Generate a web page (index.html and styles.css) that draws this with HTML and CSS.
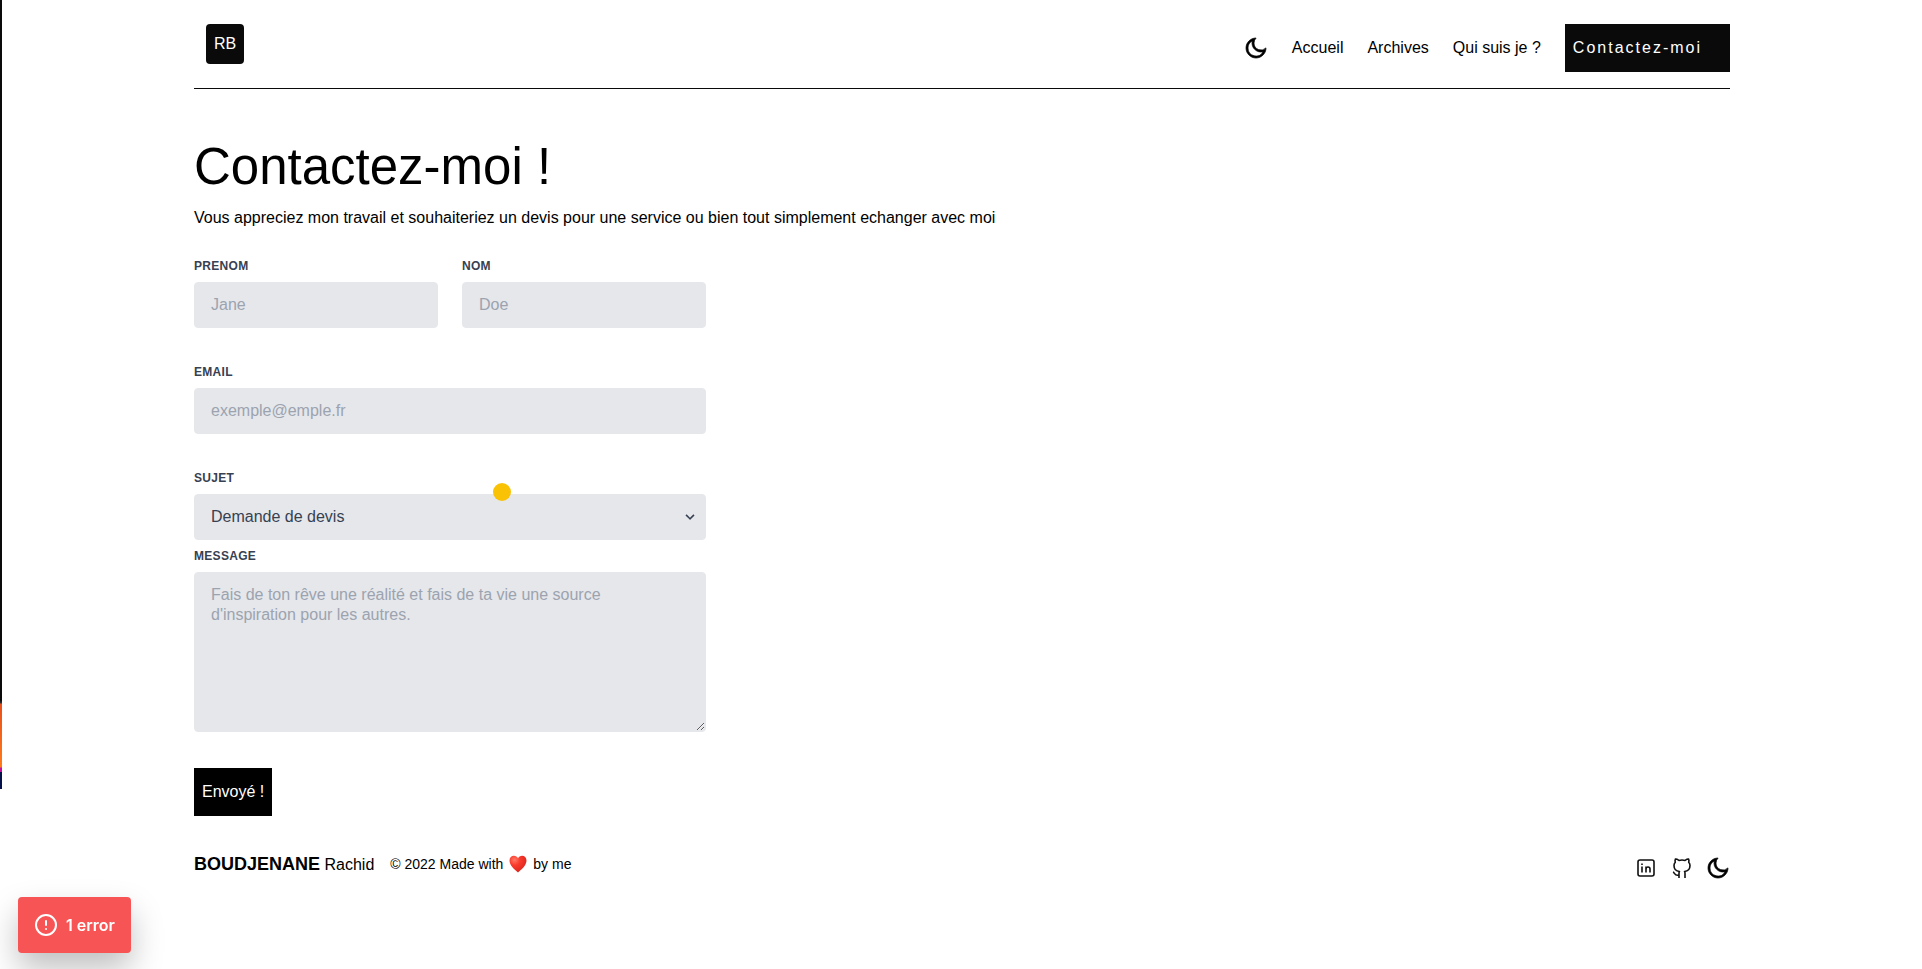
FILE: index.html
```html
<!DOCTYPE html>
<html lang="fr">
<head>
<meta charset="utf-8">
<title>Contactez-moi</title>
<link rel="stylesheet" href="styles.css">
</head>
<body>
<svg class="sprite" aria-hidden="true">
  <symbol id="moon" viewBox="0 0 24 24"><path fill="currentColor" stroke="currentColor" stroke-width="0.7" d="M10 7a7 7 0 0 0 12 4.9v.1c0 5.523-4.477 10-10 10S2 17.523 2 12 6.477 2 12 2h.1A6.979 6.979 0 0 0 10 7zm-6 5a8 8 0 0 0 15.062 3.762A9 9 0 0 1 8.238 4.938 7.999 7.999 0 0 0 4 12z"/></symbol>
</svg>
<div class="edge"></div>
<div class="page">
  <header class="header">
    <a class="logo" href="#">RB</a>
    <nav class="nav">
      <button class="icon-button" type="button" aria-label="Mode sombre"><svg class="icon"><use href="#moon"/></svg></button>
      <a href="#">Accueil</a>
      <a href="#">Archives</a>
      <a href="#">Qui suis je ?</a>
      <a class="nav-contact" href="#">Contactez-moi</a>
    </nav>
  </header>
  <main>
    <h1 class="title">Contactez-moi !</h1>
    <p class="intro">Vous appreciez mon travail et souhaiteriez un devis pour une service ou bien tout simplement echanger avec moi</p>
    <form class="form">
      <div class="row">
        <div class="field">
          <label for="prenom">Prenom</label>
          <input id="prenom" type="text" placeholder="Jane">
        </div>
        <div class="field">
          <label for="nom">Nom</label>
          <input id="nom" type="text" placeholder="Doe">
        </div>
      </div>
      <div class="row">
        <div class="field">
          <label for="email">Email</label>
          <input id="email" type="email" placeholder="exemple@emple.fr">
        </div>
      </div>
      <div class="row row-tight">
        <div class="field">
          <label for="sujet">Sujet</label>
          <div class="select">
            <select id="sujet"><option>Demande de devis</option></select>
            <svg class="chevron" viewBox="0 0 20 20" aria-hidden="true"><path fill="currentColor" d="M9.293 12.95l.707.707L15.657 8l-1.414-1.414L10 10.828 5.757 6.586 4.343 8z"/></svg>
            <span class="cursor-dot"></span>
          </div>
        </div>
      </div>
      <div class="row">
        <div class="field">
          <label for="message">Message</label>
          <textarea id="message" placeholder="Fais de ton rêve une réalité et fais de ta vie une source d'inspiration pour les autres."></textarea>
        </div>
      </div>
      <button class="submit" type="submit">Envoyé !</button>
    </form>
  </main>
  <footer class="footer">
    <p class="name"><strong>BOUDJENANE</strong> Rachid</p>
    <p class="made">© 2022 Made with
      <svg class="heart" viewBox="0 0 18 18" role="img" aria-label="cœur">
        <defs><radialGradient id="red" cx="0.3" cy="0.25" r="0.8"><stop offset="0" stop-color="#ff7a66"/><stop offset="0.4" stop-color="#f93a2c"/><stop offset="1" stop-color="#d9251c"/></radialGradient></defs>
        <path fill="url(#red)" d="M9 17.500C5.500 14.500.500 10.500.500 5.500.500 2.700 2.500.800 4.900.800 6.700.800 8.300 1.800 9 3.600 9.700 1.800 11.300.800 13.100.800c2.400 0 4.400 1.900 4.400 4.700 0 5-5 9-8.500 12z"/>
      </svg>
      by me</p>
    <div class="social">
      <a href="#" aria-label="LinkedIn"><svg class="icon line" viewBox="0 0 24 24"><rect x="4" y="4" width="16" height="16" rx="2"/><path d="M8 10.500v6M8 7.500v1.500M12 16.500v-6M16 16.500v-3.500a2 2 0 0 0-4 0"/></svg></a>
      <a href="#" aria-label="GitHub"><svg class="icon line" viewBox="0 0 24 24"><path d="M3 16c1.700.5 1.700 4.400 6 3M15 22v-4.500c0-1 .1-1.400-.5-2 2.800-.3 5.500-1.400 5.500-6a4.600 4.600 0 0 0-1.300-3.200 4.200 4.200 0 0 0-.1-3.200s-1.100-.3-3.500 1.300a12.300 12.300 0 0 0-6.200 0C6.500 2.800 5.400 3.100 5.400 3.100a4.200 4.200 0 0 0-.1 3.200A4.600 4.600 0 0 0 4 9.500c0 4.600 2.700 5.700 5.500 6-.6.6-.5 1.200-.5 2V22"/></svg></a>
      <button class="icon-button" type="button" aria-label="Mode sombre"><svg class="icon"><use href="#moon"/></svg></button>
    </div>
  </footer>
</div>
<button class="toast" type="button">
  <svg class="icon" viewBox="0 0 24 24" fill="none" stroke="currentColor" stroke-width="2" stroke-linecap="round" aria-hidden="true"><circle cx="12" cy="12" r="10"/><path d="M12 8v4M12 16h.01"/></svg>
  <span>1 error</span>
</button>
</body>
</html>
```
FILE: styles.css
```css
* { box-sizing: border-box; }

body {
  margin: 0;
  padding-left: 2px;
  min-height: 100vh;
  background: #fff;
  color: #000;
  font-family: "Liberation Sans", Arial, sans-serif;
  font-size: 16px;
  line-height: 24px;
}

h1, p { margin: 0; }
a { color: inherit; text-decoration: none; }
button, input, select, textarea { font: inherit; color: inherit; }

.sprite { display: none; }
.icon { display: block; width: 24px; height: 24px; }
.line {
  fill: none;
  stroke: #111;
  stroke-width: 1.6;
  stroke-linejoin: round;
}
.icon-button {
  padding: 0;
  border: 0;
  background: none;
}

.edge {
  position: absolute;
  top: 0;
  left: 0;
  width: 2px;
  height: 789px;
  background: linear-gradient(#0a0a0a 0 700px, #333 703px, #e8501c 704px, #ff7a1a 767px, #c0129c 768px 772px, #04114a 772px);
}

.page {
  width: 80%;
  margin: 0 auto;
}

.header {
  display: flex;
  justify-content: space-between;
  align-items: flex-start;
  padding: 24px 0 16px;
  border-bottom: 1px solid #0a0a0a;
}
.logo {
  margin-left: 12px;
  padding: 8px;
  border-radius: 4px;
  background: #0a0a0a;
  color: #fff;
}
.nav {
  display: flex;
  align-items: center;
  gap: 24px;
}
.nav-contact {
  padding: 12px 28px 12px 8px;
  background: #0a0a0a;
  color: #fff;
  letter-spacing: 2px;
}

.title {
  margin-top: 48px;
  font-size: 51px;
  font-weight: 400;
  line-height: 60px;
}
.intro { margin-top: 9px; }

.form {
  max-width: 512px;
  margin-top: 28px;
}
.row {
  display: flex;
  gap: 24px;
  margin-bottom: 36px;
}
.row-tight { margin-bottom: 8px; }
.field { flex: 1; min-width: 0; }
.field label {
  display: block;
  margin-bottom: 8px;
  color: #374151;
  font-size: 12px;
  font-weight: 700;
  line-height: 16px;
  letter-spacing: 0.025em;
  text-transform: uppercase;
}
.field input,
.field select,
.field textarea {
  display: block;
  width: 100%;
  padding: 12px 16px;
  border: 1px solid #e5e7eb;
  border-radius: 4px;
  background: #e5e7eb;
  color: #374151;
  line-height: 20px;
  appearance: none;
}
.field input, .field select { height: 46px; }
.field textarea { height: 160px; }
.field ::placeholder { color: #9ca3af; opacity: 1; }

.select { position: relative; }
.chevron {
  position: absolute;
  top: 15px;
  right: 8px;
  width: 16px;
  height: 16px;
  color: #374151;
  pointer-events: none;
}
.cursor-dot {
  position: absolute;
  top: -11px;
  left: 299px;
  width: 18px;
  height: 18px;
  border-radius: 50%;
  background: #fac205;
}

.submit {
  display: block;
  padding: 12px 8px;
  border: 0;
  background: #000;
  color: #fff;
}

.footer {
  display: flex;
  align-items: flex-start;
  margin-top: 36px;
}
.name strong { font-size: 18px; }
.made {
  display: flex;
  align-items: center;
  gap: 6px;
  margin-left: 16px;
  font-size: 14px;
}
.heart { width: 18px; height: 18px; }
.social {
  display: flex;
  gap: 12px;
  margin-top: 4px;
  margin-left: auto;
}

.toast {
  position: fixed;
  left: 18px;
  bottom: 16px;
  display: flex;
  align-items: center;
  gap: 8px;
  padding: 16px;
  border: 0;
  border-radius: 4px;
  background: #f75555;
  color: #fff;
  font-family: Inter, sans-serif;
  font-weight: 600;
  box-shadow: 0 16px 32px rgba(0, 0, 0, 0.25);
}
```
